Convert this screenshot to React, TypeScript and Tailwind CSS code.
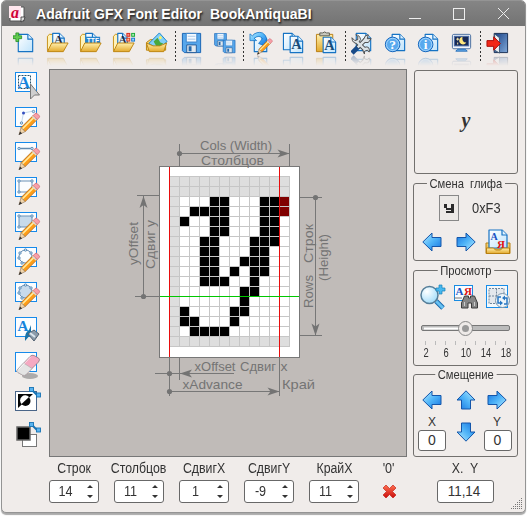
import React from "react";

const outline = { stroke: "#1673c4", strokeWidth: 1.2 };

function Defs() {
  return (
    <svg className="absolute size-0" aria-hidden="true">
      <defs>
        <linearGradient id="paper" x1="0" y1="0" x2="1" y2="1">
          <stop offset="0" stopColor="#fff" />
          <stop offset="1" stopColor="#bfe3fb" />
        </linearGradient>
        <linearGradient id="gold" x1="0" y1="0" x2="0" y2="1">
          <stop offset="0" stopColor="#fff0ae" />
          <stop offset="1" stopColor="#e3a92c" />
        </linearGradient>
        <linearGradient id="blue" x1="0" y1="0" x2="1" y2="1">
          <stop offset="0" stopColor="#b9edff" />
          <stop offset=".5" stopColor="#4fb4f8" />
          <stop offset="1" stopColor="#1572df" />
        </linearGradient>
        <linearGradient id="door" x1="0" y1="0" x2="1" y2="1">
          <stop offset="0" stopColor="#163f85" />
          <stop offset="1" stopColor="#82a9d8" />
        </linearGradient>
        <radialGradient id="lens" cx=".35" cy=".3" r=".8">
          <stop offset="0" stopColor="#fff" />
          <stop offset="1" stopColor="#9bdafa" />
        </radialGradient>
        <linearGradient id="cross" x1="0" y1="0" x2="0" y2="1">
          <stop offset="0" stopColor="#ff7050" />
          <stop offset="1" stopColor="#c80d0d" />
        </linearGradient>
      </defs>
    </svg>
  );
}

type Box = { x: number; y: number; w: number; h: number };

function Paper({ x, y, w, h }: Box) {
  return (
    <g {...outline} strokeLinejoin="round">
      <path d={`M${x} ${y}h${w - 5}l5 5v${h - 5}h${-w}z`} fill="url(#paper)" />
      <path d={`M${x + w - 5} ${y}v5h5`} fill="#dff2ff" />
    </g>
  );
}

function Glyph({ x, y, size, color, children }: { x: number; y: number; size: number; color: string; children: string }) {
  return (
    <text x={x} y={y} fontSize={size} fill={color} textAnchor="middle" fontWeight="700" fontFamily="'Liberation Serif', serif">
      {children}
    </text>
  );
}

function FolderBack() {
  return <path d="M1.500 20.500V5.500l2-2h4l2 2h4V20z" fill="#fff2b9" stroke="#c79016" />;
}
function FolderFront() {
  return <path d="M1.500 21.500L6 12.500h17l-5 9z" fill="url(#gold)" stroke="#bd8512" strokeLinejoin="round" />;
}

function Floppy() {
  return (
    <g>
      <path d="M2.5 2.5h19v20h-17l-2-2z" fill="#56a7ec" stroke="#1762b4" />
      <path d="M6.5 2.5h11v9h-11z" fill="#f5faff" stroke="#3c83c8" />
      <path d="M8 5.5h8M8 8.5h8" stroke="#a5c6e7" />
      <path d="M7 14.5h10v8H7z" fill="#e1e8ee" stroke="#275d9a" />
      <path d="M9 16h3v5H9z" fill="#2468ab" />
    </g>
  );
}

function Pencil() {
  return (
    <g>
      <path d="M7 17L19 5l4 4-12 12z" fill="#ff9d17" stroke="#a8641c" strokeWidth=".8" />
      <path d="M8 18.5L20.5 6" stroke="#ffe89a" strokeWidth="1.6" />
      <path d="M7 17l4 4-6 3z" fill="#f0d5ad" stroke="#8b6b48" strokeWidth=".6" />
      <path d="M6 21l2 2-3.5 1.5z" fill="#333" />
      <path d="M19 5l2-2q1-1 2 0l2 2q1 1 0 2l-2 2z" fill="#f7a0a8" stroke="#d26a75" strokeWidth=".8" />
      <path d="M18.3 5.7l4 4" stroke="#d9d9d9" strokeWidth="1.4" />
    </g>
  );
}

function CircleBadge({ mark }: { mark: string }) {
  return (
    <g>
      <circle cx="9" cy="14" r="7.6" fill="#59a9ee" stroke="#1464bb" />
      <circle cx="9" cy="14" r="6.4" fill="none" stroke="#b8e0ff" strokeWidth=".8" />
      <Glyph x={9} y={19} size={14} color="#fff">{mark}</Glyph>
    </g>
  );
}

type Name =
  | "new" | "open" | "ttf" | "grid" | "image" | "save" | "saveall" | "edit" | "copy" | "paste"
  | "tools" | "help" | "info" | "screen" | "exit";

const drawings: Record<Name, React.ReactNode> = {
  new: (
    <>
      <Paper x={5.5} y={3.5} w={15} h={18} />
      <path d="M0 5h3V2h3v3h3v3H6v3H3V8H0z" fill="#63cb50" stroke="#1f8a1d" strokeWidth=".8" />
    </>
  ),
  open: (
    <>
      <FolderBack /><Paper x={7} y={2.5} w={12} h={14} />
      <Glyph x={13} y={14} size={13} color="#202942">A</Glyph><FolderFront />
    </>
  ),
  ttf: (
    <>
      <FolderBack /><Paper x={7} y={2.5} w={12} h={14} />
      <rect x="7" y="6" width="15" height="7" fill="#2683cd" />
      <text x="14.5" y="12" fontSize="7" fontWeight="700" fontFamily="'Liberation Sans', sans-serif" fill="#fff" textAnchor="middle">TTF</text>
      <FolderFront />
    </>
  ),
  grid: (
    <>
      <FolderBack /><Paper x={6} y={2.5} w={10} h={14} />
      <Glyph x={11} y={14} size={12} color="#202942">A</Glyph><FolderFront />
      <rect x="15.5" y="2.5" width="3" height="3" fill="#fa8b83" stroke="#d62a1d" />
      <rect x="20.5" y="2.5" width="3" height="3" fill="#a4edb0" stroke="#18a936" />
      <rect x="15.5" y="7.5" width="3" height="3" fill="#ffb596" stroke="#dd3b18" />
      <rect x="20.5" y="7.5" width="3" height="3" fill="#9bd1ff" stroke="#1678cd" />
    </>
  ),
  image: (
    <>
      <path d="M1.5 12l4-3h5l2 2h9v9h-20z" fill="#f5d273" stroke="#b9850f" />
      <path d="M4 13L15 2l8 9-9 8z" fill="#81cff8" stroke="#1685cd" />
      <path d="M9 11l4-4 3 5 3 1-6 5z" fill="#48a83f" />
      <circle cx="16" cy="7" r="1.5" fill="#fff45a" />
      <path d="M1.5 12.5l7 3h7l7-3-3 9h-15z" fill="url(#gold)" stroke="#bd8512" />
    </>
  ),
  save: <Floppy />,
  saveall: (
    <>
      <g transform="translate(0 1) scale(.65)"><Floppy /></g>
      <g transform="translate(9 8) scale(.65)"><Floppy /></g>
    </>
  ),
  edit: (
    <>
      <Paper x={5.5} y={3.5} w={13} h={18} />
      <path d="M1 3v7h7L5.5 7.5Q11 3.5 14 8l-4 5 5 2q7-8-1-13Q8 0 3.5 5z" fill="url(#blue)" stroke="#1673c4" strokeWidth=".8" />
      <g transform="translate(5 6) scale(.76)"><Pencil /></g>
    </>
  ),
  copy: (
    <>
      <Paper x={1.5} y={2.5} w={14} h={17} /><Paper x={8.5} y={5.5} w={13} h={17} />
      <Glyph x={15} y={19} size={15} color="#174e7b">A</Glyph>
    </>
  ),
  paste: (
    <>
      <path d="M1.5 3.5h17v18h-17z" fill="url(#gold)" stroke="#b87d14" />
      <path d="M5 5h10V2h-3q-2-2-4 0H5z" fill="#c8c8be" stroke="#5e5e52" />
      <Paper x={8.5} y={6.5} w={13} h={16} />
      <Glyph x={15} y={20} size={15} color="#174e7b">A</Glyph>
    </>
  ),
  tools: (
    <>
      <Paper x={5.5} y={2.5} w={15} h={18} />
      <path d="M1 23l7-7" stroke="#174a88" strokeWidth="5" />
      <path d="M7 17L15 9M5 10l10 10" stroke="#4d4d4d" strokeWidth="4.500" fill="none" />
      <path d="M1 7l3 3 3-1V6L5 4q4 0 5 5l-3 4q-6 0-6-6zM13 9l2-4 3-1-1 4 4 0-3 4-4 0zM14 17q6-2 5 5l-2-2-3 1v3q-3-3 0-7z" fill="#dde3e6" stroke="#4d4d4d" />
      <path d="M7 17L15 9M6 11l9 9" stroke="#dde3e6" strokeWidth="2.500" />
    </>
  ),
  help: (<><Paper x={8.5} y={3.5} w={13} h={17} /><CircleBadge mark="?" /></>),
  info: (<><Paper x={8.5} y={3.5} w={13} h={17} /><CircleBadge mark="i" /></>),
  screen: (
    <>
      <rect x="2.5" y="3.5" width="19" height="15" rx="1.5" fill="#f2f5fb" stroke="#486e9f" />
      <rect x="4.5" y="5.5" width="15" height="10" fill="#192a57" stroke="#476ba7" />
      <path d="M13 6a4 4 0 1 0 4 6q-5 0-4-6z" fill="#ffe67d" />
      <path d="M8 7v3M6.5 8.5h3M8 12v2" stroke="#fff0ad" />
      <path d="M8 19h8l2 2H6z" fill="#63a9ea" stroke="#2870b8" />
    </>
  ),
  exit: (
    <>
      <path d="M8.5 2.5h14v20h-14z" fill="url(#door)" stroke="#172e54" />
      <path d="M9 3l5 4v16l-5-3z" fill="#eaf0f4" stroke="#3e5671" />
      <path d="M1 10h7V6l7 7-7 7v-4H1z" fill="#f12716" stroke="#a90d08" />
    </>
  ),
};

function ToolIcon({ name }: { name: Name }) {
  return (
    <div className="relative h-[36px] w-[33px] shrink-0 overflow-hidden pl-[4px]">
      <svg className="size-6" viewBox="0 0 25 25">{drawings[name]}</svg>
      <svg className="absolute left-[4px] top-[24px] size-6 -scale-y-100 opacity-35 [mask-image:linear-gradient(to_top,black_0%,transparent_45%)] [&_text]:hidden" viewBox="0 0 25 25" aria-hidden="true">
        {drawings[name]}
      </svg>
    </div>
  );
}

function Sep({ className }: { className: string }) {
  return <div className={`h-[31px] w-px shrink-0 bg-[repeating-linear-gradient(to_bottom,#333_0_2px,transparent_2px_4px)] ${className}`} />;
}

const sideTools = ["select", "curve", "line", "rect", "fillrect", "circle", "fillcircle", "fill", "erase", "invert", "colors"];

function Handles({ points }: { points: number[][] }) {
  return <>{points.map(([x, y], i) => <circle key={i} cx={x} cy={y} r="1.2" fill="#d3e8f5" stroke="#5688b4" strokeWidth=".9" />)}</>;
}

const corners = [[4, 4], [17, 4], [4, 15], [17, 15]];
const ring = [[10.5, 3], [16, 6], [17, 11], [5, 6], [4, 11], [7, 16]];

function SideIcon({ kind }: { kind: string }) {
  const sheet = !["invert", "colors"].includes(kind);
  return (
    <svg className="h-[35px] w-[28px] shrink-0" viewBox="0 0 28 35">
      {sheet && <rect x=".5" y=".5" width="21" height="19" fill="#fbfdff" stroke="#168aeb" />}
      {kind === "select" && (
        <>
          <rect x="3.5" y="3.5" width="12" height="13" fill="none" stroke="#28536b" strokeDasharray="2 1" />
          <Glyph x={9} y={16} size={17} color="#1684dc">A</Glyph>
          <path d="M15.5 12v15l4-4h5z" fill="#cfcfcf" stroke="#777" />
        </>
      )}
      {kind === "curve" && (<><path d="M6.5 16L8.5 6l10-2" fill="none" stroke="#c4d9ed" /><Handles points={[[6.5, 16], [18.5, 4.5]]} /><circle cx="8.5" cy="6" r="1.5" fill="#344fc0" /></>)}
      {kind === "line" && (<><path d="M4 6.5h13" stroke="#628baf" strokeWidth="1.4" /><Handles points={[[4, 6.5], [17, 6.5]]} /></>)}
      {(kind === "rect" || kind === "fillrect") && (
        <><rect x="4" y="4" width="13" height="11" fill={kind === "rect" ? "none" : "#c7daec"} stroke="#6c91b6" /><Handles points={corners} /></>
      )}
      {(kind === "circle" || kind === "fillcircle") && (
        <><circle cx="10.5" cy="9.5" r="6.5" fill={kind === "circle" ? "none" : "#c7daec"} stroke="#6c91b6" /><Handles points={ring} /></>
      )}
      {["curve", "line", "rect", "fillrect", "circle", "fillcircle"].includes(kind) && <g transform="translate(-.9 3.6)"><Pencil /></g>}
      {kind === "fill" && (
        <>
          <Glyph x={8} y={14} size={15} color="#1684dc">A</Glyph>
          <path d="M10 24q-1-8 4-11l2-5v9z" fill="#1873a9" />
          <path d="M13 17l6-4 5 4-5 7z" fill="#8c9caa" stroke="#526170" />
          <path d="M15 16l5 4" stroke="#dbe5ed" strokeWidth="2" />
        </>
      )}
      {kind === "erase" && (
        <>
          <ellipse cx="15" cy="24" rx="8" ry="3" fill="#777" opacity=".55" />
          <path d="M2.500 17.500L15 4.500q2-2 4-1l4.500 2.500q2 1.500 0 4L11 22.500q-1.500 1.500-3.500.5L3 20.500q-2-1-.5-3z" fill="#f5a9c2" stroke="#8d7782" strokeWidth=".8" />
          <path d="M2.500 17.500l6-6.500 8.500 5.500-6 6q-1.500 1.500-3.500.5L3 20.500q-2-1-.5-3z" fill="#e4e4e4" stroke="#aaa" strokeWidth=".6" />
          <path d="M4 17L16 4.500" stroke="#fff" opacity=".7" />
        </>
      )}
      {kind === "invert" && (
        <>
          <rect x=".5" y="4.5" width="21" height="19" fill="#fff" stroke="#4a6588" />
          <path d="M3 7h15L3 21z" fill="#050505" />
          <circle cx="10.5" cy="14" r="5" fill="#050505" />
          <path d="M6.5 17A5 5 0 0 1 14 10z" fill="#fff" />
        </>
      )}
      {kind === "colors" && (
        <>
          <rect x="7.5" y="12.5" width="14" height="12" fill="#fff" stroke="#777" />
          <rect x="2" y="5" width="13" height="13" fill="#000" stroke="#666" strokeWidth="1.5" />
        </>
      )}
      {!sheet && (
        <g fill="#5bb3ef" stroke="#1773b4" strokeWidth=".9">
          <path d="M17 3l6 6" strokeWidth="2" />
          <rect x="14.5" y=".5" width="4" height="4" /><rect x="21.5" y="6" width="4" height="4" />
        </g>
      )}
    </svg>
  );
}

const glyph = [
  "...##...##@",
  ".####...##@",
  "#..##...##.",
  "...##...##.",
  "..##...###.",
  "..##...##..",
  "..##..###..",
  "..##.#.##..",
  "..###..#...",
  "......##...",
  "......#....",
  "#....##....",
  "##...#.....",
  ".####......",
];

function Head({ x, y, turn }: { x: number; y: number; turn: number }) {
  return <path transform={`translate(${x} ${y}) rotate(${turn})`} d="M0 0L-12-4-9 0-12 4z" fill="#737373" stroke="none" />;
}

function Dim({ x, y, w, up, children }: { x: number; y: number; w: number; up?: boolean; children: string }) {
  return (
    <text transform={`translate(${x} ${y})${up ? " rotate(-90)" : ""}`} textLength={w} lengthAdjust="spacingAndGlyphs" className="whitespace-pre">
      {children}
    </text>
  );
}

function GlyphDiagram() {
  return (
    <svg className="block" width="356" height="385" viewBox="50 70 356 385">
      <g shapeRendering="crispEdges">
        <rect x="159.5" y="166.5" width="140" height="191" fill="#fff" stroke="#777" />
        <rect x="169" y="176" width="121" height="171" fill="#dedede" />
        <rect x="180" y="197" width="110" height="139" fill="#fff" />
        <path
          d={Array.from({ length: 13 }, (_, i) => `M${169.5 + i * 10} 176v171`).join("") + Array.from({ length: 18 }, (_, i) => `M169 ${176.5 + i * 10}h121`).join("")}
          stroke="#c6c6c6"
        />
        {glyph.flatMap((row, r) =>
          [...row].map((c, i) => c !== "." && <rect key={`${r}-${i}`} x={180 + i * 10} y={197 + r * 10} width="9" height="9" fill={c === "#" ? "#000" : "#800000"} />)
        )}
        <path d="M169.5 167v190M279.5 167v190" stroke="#e80c0c" />
        <path d="M160 296.5h139" stroke="#00c800" />
        <path
          d="M179.5 144v22M289.5 144v22M179 153.5h110M137 195.5h22M143.5 196v100M135 296.5h24M300 197.5h22M315.5 197v138M300 335.5h22M169.5 358v38M179.5 358v22M279.5 358v38M155 373.5h79M169 391.5h110"
          stroke="#777"
        />
      </g>
      <g fill="#737373">
        <circle cx="179.5" cy="153.5" r="2.6" /><circle cx="143.5" cy="296.5" r="2.6" />
        <circle cx="315.5" cy="197.5" r="2.6" /><circle cx="169.5" cy="373.5" r="2.6" /><circle cx="169.5" cy="391.5" r="2.6" />
        <Head x={289.5} y={153.5} turn={0} /><Head x={143.5} y={196} turn={-90} />
        <Head x={315.5} y={335.5} turn={90} /><Head x={180} y={373.5} turn={180} /><Head x={279.5} y={391.5} turn={0} />
      </g>
      <g fill="#747474" fontSize="13" fontFamily="'Liberation Sans', sans-serif">
        <Dim x={200} y={150} w={72}>Cols (Width)</Dim>
        <Dim x={201} y={165} w={63}>Столбцов</Dim>
        <Dim x={138} y={265} w={43} up>yOffset</Dim>
        <Dim x={155} y={269} w={49} up>Сдвиг y</Dim>
        <Dim x={313} y={308} w={33} up>Rows</Dim>
        <Dim x={313} y={263} w={39} up>Строк</Dim>
        <Dim x={328} y={281} w={47} up>(Height)</Dim>
        <Dim x={194.5} y={371} w={41}>xOffset</Dim>
        <Dim x={240} y={371} w={36}>Сдвиг</Dim>
        <Dim x={280.5} y={371} w={7}>x</Dim>
        <Dim x={182.5} y={389} w={60}>xAdvance</Dim>
        <Dim x={282} y={389} w={33}>Край</Dim>
      </g>
    </svg>
  );
}

function Arrow({ turn }: { turn: string }) {
  return (
    <svg className={`size-5 shrink-0 ${turn}`} viewBox="0 0 20 20">
      <path d="M.8 10L10 1v4.5h9v9h-9V19z" fill="url(#blue)" stroke="#1456aa" strokeLinejoin="round" />
    </svg>
  );
}

function Group({ title, className, children }: { title?: string; className: string; children: React.ReactNode }) {
  return (
    <section className={`relative shrink-0 rounded-[3px] border border-[#72706e] ${className}`}>
      {title && (
        <div className="absolute inset-x-0 -top-[9px] flex justify-center">
          <h2 className="scale-x-[.83] whitespace-pre bg-[#f0ecea] px-[3px] text-[13.5px] leading-[17px]">{title}</h2>
        </div>
      )}
      {children}
    </section>
  );
}

const BoxValue = ({ children, className }: { children: React.ReactNode; className: string }) => (
  <div className={`flex items-center rounded-[3px] border border-[#686868] bg-white text-[14px] ${className}`}>{children}</div>
);

const fields = [["Строк", "14"], ["Столбцов", "11"], ["СдвигX", "1"], ["СдвигY", "-9"], ["КрайX", "11"]];

export default function App() {
  return (
    <main className="h-[516px] w-[527px] overflow-hidden bg-white pl-px font-['Liberation_Sans',sans-serif] text-[#333]">
      <Defs />
      <div className="flex h-[513px] w-[525px] flex-col overflow-hidden rounded-[5px] border border-[#949494] bg-[#f0ecea] shadow-[0_2px_1px_#aaa]">
        <header className="flex h-[25px] shrink-0 items-center bg-linear-to-b from-[#858585] to-[#737373] pl-[6px]">
          <svg className="h-5 w-[19px] overflow-visible" viewBox="0 -1 19 20">
            <path d="M2 2h14v14H2z" fill="#fff" stroke="#555" />
            <path d="M1 1h12v12H1z" fill="#ffe7ef" />
            <path d="M13 17q4-1 4-5h-4z" fill="#ddd" stroke="#333" strokeWidth=".8" />
            <text x="7" y="13" fontSize="16" fontWeight="700" fontStyle="italic" fill="#cf0038" textAnchor="middle" fontFamily="'Liberation Serif', serif">a</text>
          </svg>
          <h1 className="ml-[9px] w-[310px] whitespace-pre text-[14px] font-bold leading-5 tracking-[0.05px] text-white [text-shadow:1px_1px_1px_#333,1px_2px_2px_#333]">Adafruit GFX Font Editor  BookAntiquaBI</h1>
          <svg className="ml-[61px] h-6 w-28" viewBox="0 0 112 24" fill="none" stroke="#eee" shapeRendering="crispEdges">
            <path d="M2 16.500h12M46.500 6.500h11v11h-11z" />
            <path d="M91 6l11 11M102 6L91 17" shapeRendering="auto" />
          </svg>
        </header>

        <nav className="flex h-[43px] shrink-0 items-start pl-[7px] pt-[5px]">
          {(["new", "open", "ttf", "grid", "image"] as Name[]).map((n) => <ToolIcon key={n} name={n} />)}
          <Sep className="ml-px" />
          <ToolIcon name="save" /><ToolIcon name="saveall" />
          <Sep className="ml-px mr-px" />
          <ToolIcon name="edit" /><ToolIcon name="copy" /><ToolIcon name="paste" />
          <Sep className="ml-px mr-px" />
          <ToolIcon name="tools" /><ToolIcon name="help" /><ToolIcon name="info" /><ToolIcon name="screen" />
          <Sep className="ml-px mr-px" />
          <ToolIcon name="exit" />
        </nav>

        <div className="flex h-[389px] shrink-0">
          <aside className="flex w-[47px] shrink-0 flex-col pl-[13px] pt-[3px]">
            {sideTools.map((k) => <SideIcon key={k} kind={k} />)}
          </aside>
          <div className="h-[388px] w-[358px] shrink-0 overflow-hidden border border-[#777] bg-[#c0bbb8]">
            <GlyphDiagram />
          </div>
          <aside className="flex flex-col pl-[6px] pt-px">
            <Group className="ml-px h-[104px] w-[104px]">
              <div className="flex h-full items-center justify-center font-['Liberation_Serif',serif] text-[20px] font-bold italic leading-none">
                <span className="-translate-y-[2px]">y</span>
              </div>
            </Group>
            <Group title="Смена  глифа" className="mt-[9px] h-[78px] w-[105px]">
              <div className="flex items-center pl-[25px] pt-[11px]">
                <div className="flex h-[26px] w-[20px] items-center justify-center border border-[#888] bg-[#ece9e6]">
                  <svg className="h-[11px] w-[10px]" viewBox="0 0 10 11" fill="#2a2a2a">
                    <path d="M0 1h3v4h4V1h3v9H2V8h5V7H2V5H0z" />
                  </svg>
                </div>
                <span className="ml-[13px] origin-left scale-x-[.92] text-[14px]">0xF3</span>
              </div>
              <div className="flex items-center pl-[8px] pt-[8px]">
                <Arrow turn="" /><Arrow turn="ml-[14px] rotate-180" />
                <svg className="ml-[9px] size-[26px]" viewBox="0 0 26 26">
                  <path d="M1 14h5V8h15v6h4v10.500H1z" fill="url(#gold)" stroke="#b98010" />
                  <Paper x={4} y={1} w={18} h={18} />
                  <Glyph x={9} y={11} size={10} color="#174fc3">А</Glyph>
                  <Glyph x={16} y={19} size={11} color="#df1010">Я</Glyph>
                  <path d="M1.500 19h7l2 2h5l2-2h7v5.500h-23z" fill="url(#gold)" stroke="#b98010" />
                </svg>
              </div>
            </Group>
            <Group title="Просмотр" className="mt-[9px] h-[96px] w-[105px]">
              <div className="flex h-[40px] items-end pb-px pl-[6px]">
                <svg className="size-[26px]" viewBox="0 0 26 26">
                  <path d="M16 17l7 7" stroke="#1768ac" strokeWidth="5" /><path d="M16 17l7 7" stroke="#67c1f2" strokeWidth="3" />
                  <circle cx="9.500" cy="11" r="8.500" fill="url(#lens)" stroke="#557d98" strokeWidth="1.500" />
                  <path d="M16 4h3V1h3v3h3v3h-3v3h-3V7h-3z" fill="#48b8ef" stroke="#1781ba" strokeWidth=".7" />
                </svg>
                <svg className="ml-[7px] size-[26px]" viewBox="0 0 26 26">
                  <rect x="1.500" y="1.500" width="18" height="15" fill="#f8fcff" stroke="#188be2" />
                  <Glyph x={6.500} y={11} size={11} color="#174fc3">А</Glyph><Glyph x={15} y={11} size={11} color="#df1010">Я</Glyph>
                  <path d="M1 14h8" stroke="#777" />
                  <path d="M8.500 24v-5l3-7h4v2h2v-2h4l3 7v5h-6v-5h-3.500v5z" fill="#858585" stroke="#3c3c3c" />
                  <path d="M11.500 18v4M21.500 18v4" stroke="#ccc" />
                </svg>
                <svg className="ml-[6px] size-[26px]" viewBox="0 0 26 26">
                  <rect x="1.500" y="1.500" width="21" height="22" fill="#f2f8fc" stroke="#168ce9" />
                  <path d="M4 4.500h15v15H4zM4 12h15M11.500 4.500v15" fill="#e4e8ed" stroke="#71869b" strokeDasharray="2 1" />
                  <circle cx="17.500" cy="16.500" r="7" fill="#edf5fa" stroke="#7993a9" />
                  <path d="M16 13h-3v6h3M19 20h3v-6h-3" fill="none" stroke="#2776c2" strokeWidth="1.500" />
                  <path d="M15 16.500v5l3-2.500zM20 11.500v5l-3-2.500z" fill="#2776c2" />
                </svg>
              </div>
              <svg className="ml-[7px] mt-[8px] h-[26px] w-[92px]" viewBox="0 0 92 26">
                <rect x=".5" y="6.500" width="88" height="5" rx="1.500" fill="#bbb" stroke="#777" />
                <path d="M3 9.500h35" stroke="#fff" strokeWidth="2" />
                <circle cx="44.500" cy="9.500" r="7" fill="#eeeae8" stroke="#888" /><circle cx="44.500" cy="9.500" r="3.500" fill="#999" />
                <path d={Array.from({ length: 9 }, (_, i) => `M${4.5 + i * 10} 22v4`).join("")} stroke="#bbb" />
              </svg>
              <div className="ml-[2px] mt-px flex text-[12px] leading-[14px]">
                {[2, 6, 10, 14, 18].map((n) => <span key={n} className="w-5 scale-x-[.78] text-center">{n}</span>)}
              </div>
            </Group>
            <Group title="Смещение" className="mt-[8px] h-[83px] w-[105px]">
              <div className="flex justify-between px-[8px] pt-[13px]">
                <div className="flex w-[28px] flex-col items-center">
                  <div className="-ml-[8px] mt-[2px]"><Arrow turn="" /></div>
                  <span className="mt-[5px] -translate-x-[4px] text-[12px] leading-[15px]">X</span>
                  <BoxValue className="ml-[-8px] h-[21px] w-[28px] justify-center">0</BoxValue>
                </div>
                <div className="flex flex-col gap-[12px] pt-[2px]"><Arrow turn="rotate-90" /><Arrow turn="-rotate-90" /></div>
                <div className="flex w-[28px] flex-col items-center">
                  <div className="ml-[4px] mt-[2px]"><Arrow turn="rotate-180" /></div>
                  <span className="mt-[5px] translate-x-[2px] text-[12px] leading-[15px]">Y</span>
                  <BoxValue className="ml-[5px] h-[21px] w-[28px] justify-center">0</BoxValue>
                </div>
              </div>
            </Group>
          </aside>
        </div>

        <footer className="flex h-[54px] shrink-0 pl-[47px]">
          {fields.map(([label, value]) => (
            <div key={label} className="w-[65px] shrink-0">
              <div className="flex h-[21px] w-[50px] items-center justify-center"><span className="scale-x-[.88] text-[14px]">{label}</span></div>
              <BoxValue className="mt-px h-[23px] w-[50px]">
                <span className="w-[31px] scale-x-[.9] text-center">{value}</span>
                <svg className="ml-[5px] h-[15px] w-[8px]" viewBox="0 0 8 15" fill="#333"><path d="M1 4l3-3 3 3zM1 11l3 3 3-3z" /></svg>
              </BoxValue>
            </div>
          ))}
          <div className="w-[30px] shrink-0 text-center text-[14px]">
            <div className="flex h-[21px] items-center justify-center"><span className="scale-x-[.9]">'0'</span></div>
            <svg className="mx-auto mt-[5px] size-[15px]" viewBox="0 0 15 15"><path d="M1 4l3-3 3.500 3.500L11 1l3 3-3.500 3.500L14 11l-3 3-3.500-3.500L4 14l-3-3 3.500-3.500z" fill="url(#cross)" stroke="#c5271c" strokeWidth=".7" /></svg>
          </div>
          <div className="ml-[33px] w-[57px] shrink-0">
            <div className="flex h-[21px] items-center justify-center"><span className="scale-x-[.88] whitespace-pre text-[14px]">X.  Y</span></div>
            <BoxValue className="mt-px h-[23px] w-[57px] justify-center"><span className="-translate-x-[2px] scale-x-[.96]">11,14</span></BoxValue>
          </div>
          <svg className="ml-[16px] mt-[39px] size-[13px] shrink-0" viewBox="0 0 13 13" fill="#777" shapeRendering="crispEdges">
            {[0, 1, 2, 3, 4, 5].flatMap((r) => Array.from({ length: r + 1 }, (_, c) => <rect key={`${r}${c}`} x={11 - c * 2} y={1 + r * 2} width="1" height="1" />))}
          </svg>
        </footer>
      </div>
    </main>
  );
}
